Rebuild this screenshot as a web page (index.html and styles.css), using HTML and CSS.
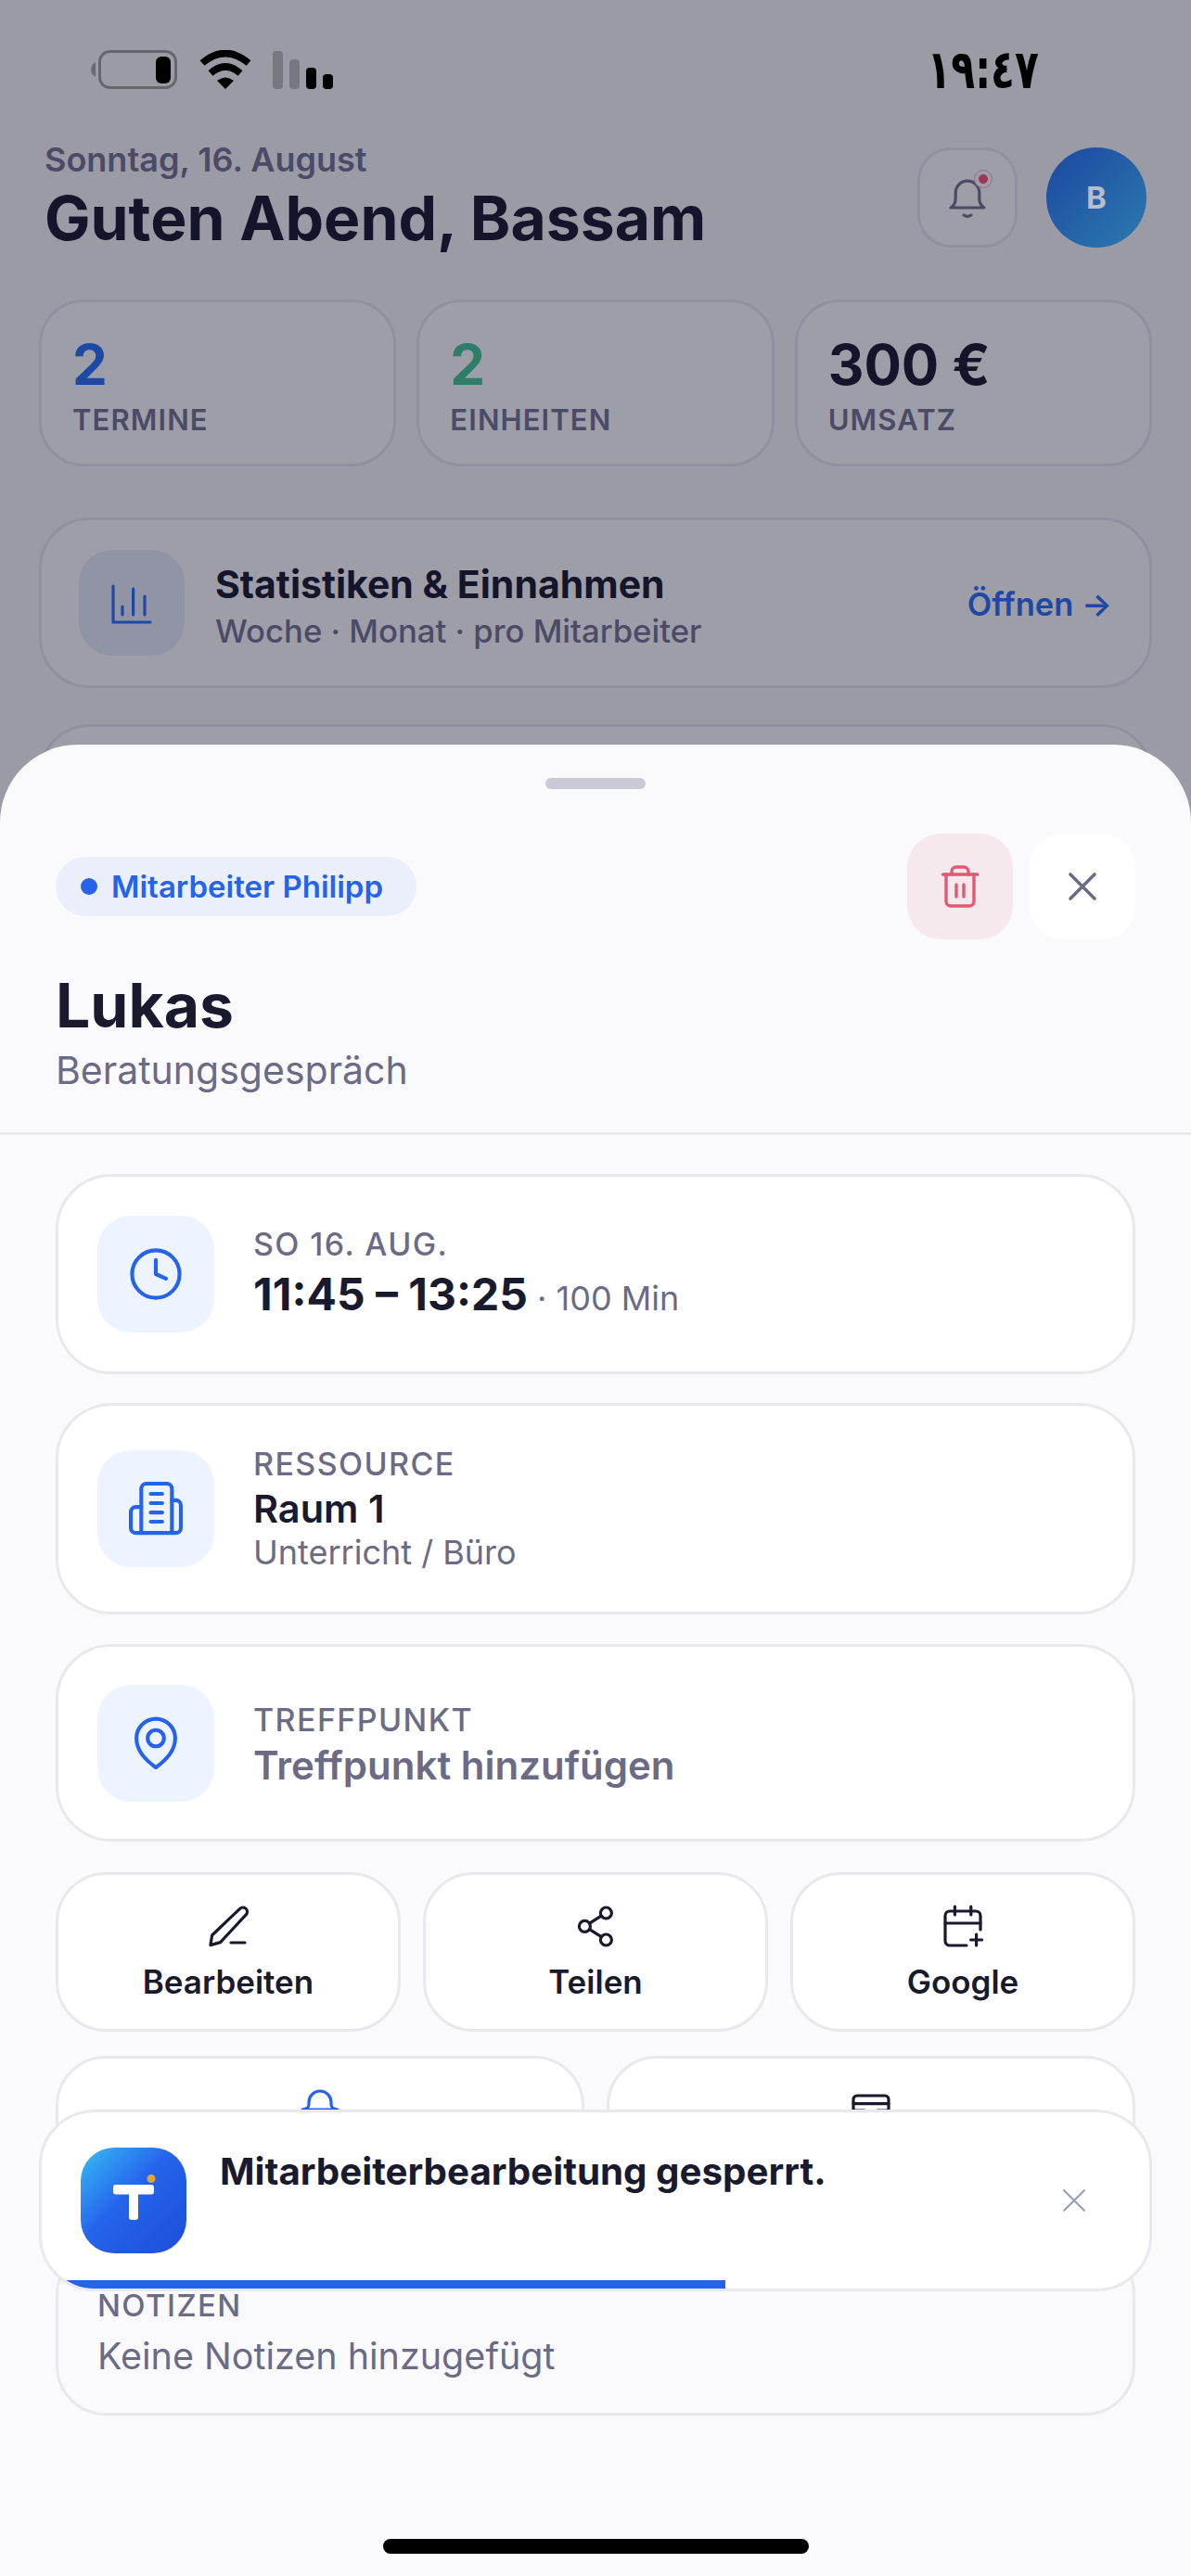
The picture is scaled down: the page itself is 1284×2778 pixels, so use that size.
FILE: index.html
```html
<!DOCTYPE html>
<html lang="de">
  <head>
    <meta charset="UTF-8" />
    <meta name="viewport" content="width=device-width, initial-scale=1.0" />
    <title>Termin Details</title>
    <link rel="stylesheet" href="styles.css">
  </head>
  <body>
    <div class="screen">

      <!-- dashboard behind the sheet -->
      <main class="dashboard">
        <header class="top">
          <div>
            <div class="date">Sonntag, 16. August</div>
            <h1 class="hello">Guten Abend, Bassam</h1>
          </div>
          <div class="top-actions">
            <div class="bell-btn">
              <svg class="ico-48" viewBox="0 0 24 24" fill="none" stroke="#757594" stroke-width="1.600" stroke-linecap="round" stroke-linejoin="round">
                <path d="M3 17.500c1.600-1 2.600-2.500 2.600-5V9.500a6.400 6.400 0 0 1 12.800 0v3c0 2.500 1 4 2.600 5z"/>
                <path d="M10 21.500q2 1.300 4 0"/>
              </svg>
              <span class="bell-dot"></span>
            </div>
            <div class="avatar">B</div>
          </div>
        </header>

        <section class="stats">
          <div class="stat">
            <div class="stat-num blue">2</div>
            <div class="stat-label">TERMINE</div>
          </div>
          <div class="stat">
            <div class="stat-num green">2</div>
            <div class="stat-label">EINHEITEN</div>
          </div>
          <div class="stat">
            <div class="stat-num">300 €</div>
            <div class="stat-label">UMSATZ</div>
          </div>
        </section>

        <section class="link-card">
          <div class="link-icon">
            <svg class="ico-48" viewBox="0 0 24 24" fill="none" stroke="#2a70fa" stroke-width="1.600" stroke-linecap="round" stroke-linejoin="round">
              <path d="M2 3v19.500h20"/>
              <path d="M7 18.500V14M12.800 18.500V4.500M19 18.500V8.500"/>
            </svg>
          </div>
          <div class="link-text">
            <div class="link-title">Statistiken &amp; Einnahmen</div>
            <div class="link-sub">Woche · Monat · pro Mitarbeiter</div>
          </div>
          <div class="link-open">Öffnen →</div>
        </section>

        <section class="link-card next"></section>
      </main>

      <div class="backdrop"></div>

      <div class="status">
        <div class="status-icons">
          <svg class="battery" viewBox="0 0 94 42" fill="none">
            <path d="M6 13a9 9 0 0 0 0 16z" fill="#6a6a72"/>
            <rect x="10.500" y="1.500" width="82" height="39" rx="11" stroke="#66666e" stroke-width="3"/>
            <rect x="71" y="7" width="16" height="29" rx="6" fill="#000"/>
          </svg>
          <svg class="wifi" viewBox="0 0 58 42" fill="none" stroke="#000" stroke-width="7.500">
            <path d="M4 14Q29 -7 54 14"/>
            <path d="M13 25Q29 11 45 25"/>
            <path d="M20 33Q29 26 38 33L29 42Z" fill="#000" stroke="none"/>
          </svg>
          <div class="signal">
            <span class="bar off b1"></span>
            <span class="bar off b2"></span>
            <span class="bar b3"></span>
            <span class="bar b4"></span>
          </div>
        </div>
        <div class="clock">١٩:٤٧</div>
      </div>

      <!-- termin sheet -->
      <section class="sheet">
        <div class="handle"></div>
        <div class="sheet-head">
          <div class="head-row">
            <div class="chip"><span class="chip-dot"></span>Mitarbeiter Philipp</div>
            <div class="head-btns">
              <div class="head-btn del">
                <svg class="ico-48" viewBox="0 0 24 24" fill="none" stroke="#e05a73" stroke-width="1.700" stroke-linecap="round" stroke-linejoin="round">
                  <path d="M2.800 5.500h18.600"/>
                  <path d="M7.500 5.500V4a2.500 2.500 0 0 1 2.500-2.500h4A2.500 2.500 0 0 1 16.500 4v1.500"/>
                  <path d="M4.500 5.500V20a2.500 2.500 0 0 0 2.500 2.500h10a2.500 2.500 0 0 0 2.500-2.500V5.500"/>
                  <path d="M10 11v6.500M14 11v6.500"/>
                </svg>
              </div>
              <div class="head-btn">
                <svg class="ico-48" viewBox="0 0 24 24" fill="none" stroke="#6b6b85" stroke-width="1.800" stroke-linecap="round">
                  <path d="M5.500 5.500l13 13M18.500 5.500l-13 13"/>
                </svg>
              </div>
            </div>
          </div>
          <h2 class="name">Lukas</h2>
          <div class="service">Beratungsgespräch</div>
        </div>

        <div class="sheet-body">
          <div class="info-card time-card">
            <div class="info-icon">
              <svg class="ico-66" viewBox="0 0 24 24" fill="none" stroke="#2563eb" stroke-width="1.500" stroke-linecap="round" stroke-linejoin="round">
                <circle cx="12" cy="12" r="9.300"/>
                <path d="M12 6.500V12l4 1.800"/>
              </svg>
            </div>
            <div class="time-text">
              <div class="info-label">SO 16. AUG.</div>
              <div class="time-line"><span class="time">11:45 – 13:25</span><span class="mins"> · 100 Min</span></div>
            </div>
          </div>

          <div class="info-card res-card">
            <div class="info-icon">
              <svg class="ico-66" viewBox="0 0 24 24" fill="none" stroke="#2563eb" stroke-width="1.500" stroke-linecap="round" stroke-linejoin="round">
                <path d="M6.300 21.500V4.200a2 2 0 0 1 2-2h8a2 2 0 0 1 2 2v17.300"/>
                <path d="M6.300 11.300H4.200a2 2 0 0 0-2 2v6.200a2 2 0 0 0 2 2h15.600a2 2 0 0 0 2-2v-8.800a2 2 0 0 0-2-2h-1.500"/>
                <path d="M10 6.200h4.500M10 9.800h4.500M10 13.500h4.500M10 17.100h4.500"/>
              </svg>
            </div>
            <div class="res-text">
              <div class="info-label">RESSOURCE</div>
              <div class="res-name">Raum 1</div>
              <div class="res-sub">Unterricht / Büro</div>
            </div>
          </div>

          <div class="info-card place-card">
            <div class="info-icon">
              <svg class="ico-66" viewBox="0 0 24 24" fill="none" stroke="#2563eb" stroke-width="1.500" stroke-linecap="round" stroke-linejoin="round">
                <path d="M12 21.500C8 18.500 4.400 15 4.400 10a7.600 7.600 0 0 1 15.200 0C19.600 15 16 18.500 12 21.500z"/>
                <circle cx="12" cy="10" r="3.200"/>
              </svg>
            </div>
            <div class="place-text">
              <div class="info-label">TREFFPUNKT</div>
              <div class="place">Treffpunkt hinzufügen</div>
            </div>
          </div>

          <div class="actions three">
            <div class="action">
              <svg class="ico-48" viewBox="0 0 24 24" fill="none" stroke="#1a1a2e" stroke-width="1.600" stroke-linecap="round" stroke-linejoin="round">
                <path d="M18.200 2.800a2.300 2.300 0 0 1 3.500 3L7.800 20.800 2.500 22.300l.8-5.300z"/>
                <path d="M13.500 21h7.500"/>
              </svg>
              <span>Bearbeiten</span>
            </div>
            <div class="action">
              <svg class="ico-48" viewBox="0 0 24 24" fill="none" stroke="#1a1a2e" stroke-width="1.600" stroke-linecap="round" stroke-linejoin="round">
                <circle cx="17.700" cy="5" r="3"/>
                <circle cx="6.200" cy="12.200" r="3"/>
                <circle cx="17.700" cy="19.500" r="3"/>
                <path d="M8.800 10.600l6.300-4M8.800 13.800l6.300 4"/>
              </svg>
              <span>Teilen</span>
            </div>
            <div class="action">
              <svg class="ico-48" viewBox="0 0 24 24" fill="none" stroke="#1a1a2e" stroke-width="1.600" stroke-linecap="round" stroke-linejoin="round">
                <path d="M21.500 14V6.500A2.500 2.500 0 0 0 19 4H5a2.500 2.500 0 0 0-2.500 2.500V20A2.500 2.500 0 0 0 5 22.500h9"/>
                <path d="M2.500 10.500h19M7.700 1.500V6M16.400 1.500V6M19.300 16.500v6M16.300 19.500h6"/>
              </svg>
              <span>Google</span>
            </div>
          </div>

          <!-- labels of this row sit behind the toast -->
          <div class="actions two">
            <div class="action">
              <svg class="ico-48" viewBox="0 0 24 24" fill="none" stroke="#2563eb" stroke-width="1.600" stroke-linecap="round" stroke-linejoin="round">
                <path d="M2.500 12c2.500-.3 3.500-1 3.500-3V8a6 6 0 0 1 12 0v1c0 2 1 2.700 3.500 3z"/>
              </svg>
            </div>
            <div class="action">
              <svg class="ico-48" viewBox="0 0 24 24" fill="none" stroke="#1a1a2e" stroke-width="1.600" stroke-linecap="round" stroke-linejoin="round">
                <path d="M2.500 20V6.500a2 2 0 0 1 2-2h15a2 2 0 0 1 2 2V20"/>
                <path d="M2.500 8.800h19M2.500 12.500h6l2 2.500h3l2-2.500h6"/>
              </svg>
            </div>
          </div>

          <div class="notes">
            <div class="info-label">NOTIZEN</div>
            <div class="notes-text">Keine Notizen hinzugefügt</div>
          </div>
        </div>
      </section>

      <!-- toast -->
      <div class="toast">
        <svg class="toast-logo" viewBox="0 0 114 114">
          <defs>
            <linearGradient id="logoGrad" x1="0" y1="0" x2="1" y2="1">
              <stop offset="0" stop-color="#38bdf8"/>
              <stop offset=".45" stop-color="#2563eb"/>
              <stop offset="1" stop-color="#1d4ed8"/>
            </linearGradient>
          </defs>
          <rect width="114" height="114" rx="36" fill="url(#logoGrad)"/>
          <rect x="35" y="40" width="44" height="10.500" rx="3" fill="#fff"/>
          <rect x="52" y="40" width="10" height="38" rx="3" fill="#fff"/>
          <circle cx="76" cy="33.500" r="4.500" fill="#e0a33e"/>
        </svg>
        <div class="toast-text">Mitarbeiterbearbeitung gesperrt.</div>
        <svg class="toast-close" viewBox="0 0 24 24" fill="none" stroke="#9a9eb5" stroke-width="2" stroke-linecap="round">
          <path d="M2 2l20 20M22 2L2 22"/>
        </svg>
        <div class="toast-bar" style="width: 61.7%"></div>
      </div>

      <div class="home-bar"></div>
    </div>
  </body>
</html>
```

FILE: styles.css
```css
* {
  box-sizing: border-box;
}
html,
body {
  margin: 0;
  padding: 0;
}
body {
  font-family: Inter, "Noto Sans", sans-serif;
  color: #1a1a2e;
  background: #fafafc;
}
h1,
h2 {
  margin: 0;
}
svg {
  display: block;
}
.screen {
  position: relative;
  width: 1284px;
  height: 2778px;
  overflow: hidden;
  background: #fafafc;
}
.ico-48 {
  width: 48px;
  height: 48px;
}
.ico-66 {
  width: 66px;
  height: 66px;
}

/* dashboard */
.dashboard {
  padding: 159px 42px 0;
}
.top {
  display: flex;
  justify-content: space-between;
  align-items: flex-start;
  height: 108px;
  padding: 0 6px;
}
.date {
  font-size: 36px;
  font-weight: 600;
  line-height: 26px;
  color: #757594;
}
.hello {
  margin-top: 10px;
  font-size: 66px;
  font-weight: 700;
  line-height: 80px;
}
.top-actions {
  display: flex;
  gap: 31px;
}
.bell-btn {
  position: relative;
  width: 108px;
  height: 108px;
  display: flex;
  align-items: center;
  justify-content: center;
  background: #fff;
  border: 3px solid #e8e8ee;
  border-radius: 36px;
}
.bell-dot {
  position: absolute;
  top: 21px;
  right: 24px;
  width: 20px;
  height: 20px;
  border-radius: 50%;
  border: 1px solid #ffaabb;
  background: radial-gradient(circle, #ff5577 4.700px, #fff 5.200px);
}
.avatar {
  position: relative;
  z-index: 1;
  width: 108px;
  height: 108px;
  border-radius: 50%;
  display: flex;
  align-items: center;
  justify-content: center;
  color: #b8bccd;
  font-size: 33px;
  font-weight: 700;
  background: linear-gradient(135deg, #1f4fa3 15%, #2a78ad 95%);
}
.stats {
  display: flex;
  gap: 22px;
  margin-top: 56px;
}
.stat {
  flex: 1;
  height: 180px;
  padding: 37px 33px 0;
  background: #fff;
  border: 3px solid #e8e8ee;
  border-radius: 48px;
}
.stat-num {
  font-size: 60px;
  font-weight: 700;
  line-height: 60px;
}
.blue {
  color: #2a70fa;
}
.green {
  color: #44c894;
}
.stat-label {
  margin-top: 10px;
  font-size: 31px;
  font-weight: 600;
  line-height: 40px;
  letter-spacing: 1.100px;
  color: #757594;
}
.link-card {
  display: flex;
  align-items: center;
  height: 184px;
  margin-top: 55px;
  padding: 0 40px 0 40px;
  background: #fff;
  border: 3px solid #e8e8ee;
  border-radius: 54px;
}
.link-card.next {
  height: 200px;
  margin-top: 39px;
}
.link-icon {
  width: 114px;
  height: 114px;
  display: flex;
  align-items: center;
  justify-content: center;
  border-radius: 36px;
  background: #eaeffb;
}
.link-text {
  flex: 1;
  margin-left: 33px;
  padding-top: 7px;
}
.link-title {
  font-size: 41px;
  font-weight: 700;
  line-height: 50px;
}
.link-sub {
  margin-top: 3px;
  font-size: 34.700px;
  font-weight: 500;
  line-height: 44px;
  color: #757594;
}
.link-open {
  padding-top: 3px;
  font-size: 34.500px;
  font-weight: 600;
  color: #2a70fa;
}
.backdrop {
  position: absolute;
  inset: 0;
  background: rgba(12, 12, 37, 0.4);
}

/* status bar */
.status {
  position: absolute;
  top: 54px;
  left: 97px;
  right: 164px;
  height: 42px;
  display: flex;
  justify-content: space-between;
  align-items: center;
}
.status-icons {
  display: flex;
  align-items: flex-end;
}
.battery {
  width: 94px;
  height: 42px;
}
.wifi {
  width: 58px;
  height: 42px;
  margin-left: 23px;
}
.signal {
  display: flex;
  align-items: flex-end;
  gap: 7px;
  margin-left: 22px;
}
.bar {
  width: 11px;
  background: #000;
  border-radius: 4px;
}
.bar.off {
  background: #77777f;
}
.b1 {
  height: 41px;
}
.b2 {
  height: 32px;
}
.b3 {
  height: 23px;
}
.b4 {
  height: 16px;
}
.clock {
  font-family: "DejaVu Sans", sans-serif;
  font-size: 58px;
  font-weight: 700;
  line-height: 42px;
  color: #000;
  transform: scaleX(0.73);
  transform-origin: right center;
}

/* sheet */
.sheet {
  position: absolute;
  top: 803px;
  left: 0;
  right: 0;
  bottom: 0;
  background: #fafafc;
  border-radius: 84px 84px 0 0;
  padding-top: 36px;
}
.handle {
  width: 108px;
  height: 12px;
  margin: 0 auto;
  border-radius: 6px;
  background: #c8cad8;
}
.sheet-head {
  margin-top: 48px;
  padding: 0 60px 42px;
  border-bottom: 3px solid #e8e8ee;
}
.head-row {
  display: flex;
  justify-content: space-between;
  align-items: center;
}
.chip {
  display: flex;
  align-items: center;
  gap: 15px;
  height: 64px;
  padding: 0 36px 0 27px;
  border-radius: 32px;
  background: #ebeffb;
  color: #2563eb;
  font-size: 33px;
  font-weight: 600;
}
.chip-dot {
  width: 18px;
  height: 18px;
  border-radius: 50%;
  background: #2563eb;
}
.head-btns {
  display: flex;
  gap: 18px;
}
.head-btn {
  width: 114px;
  height: 114px;
  display: flex;
  align-items: center;
  justify-content: center;
  border-radius: 36px;
  background: #fff;
}
.head-btn.del {
  background: #f5e9ed;
}
.name {
  margin-top: 31px;
  font-size: 66px;
  font-weight: 700;
  line-height: 80px;
}
.service {
  margin-top: 5px;
  font-size: 41px;
  line-height: 50px;
  color: #6b6b85;
}
.sheet-body {
  padding: 42px 60px 0;
  display: flex;
  flex-direction: column;
  gap: 31px;
}
.info-card {
  display: flex;
  align-items: center;
  gap: 42px;
  padding: 0 42px;
  background: #fff;
  border: 3px solid #e8e8ee;
  border-radius: 60px;
}
.time-card {
  height: 216px;
}
.res-card {
  height: 228px;
}
.place-card {
  height: 213px;
  margin-top: 1px;
}
.info-icon {
  flex: none;
  width: 126px;
  height: 126px;
  display: flex;
  align-items: center;
  justify-content: center;
  border-radius: 36px;
  background: #eef4ff;
}
.info-label {
  font-size: 34px;
  font-weight: 500;
  line-height: 40px;
  letter-spacing: 1.400px;
  color: #6b6b85;
}
.time-text {
  padding-top: 8px;
}
.time-line {
  margin-top: 6px;
  line-height: 56px;
}
.time {
  font-size: 48px;
  font-weight: 700;
}
.mins {
  font-size: 36px;
  color: #6b6b85;
}
.res-text {
  padding-top: 2px;
}
.res-name {
  margin-top: 4px;
  font-size: 41.500px;
  font-weight: 600;
  line-height: 48px;
}
.res-sub {
  font-size: 36px;
  line-height: 46px;
  color: #6b6b85;
}
.place-text {
  padding-top: 5px;
}
.place {
  margin-top: 3px;
  font-size: 42px;
  font-weight: 600;
  line-height: 52px;
  color: #6b6b85;
}
.actions {
  display: grid;
  gap: 24px;
}
.actions.three {
  grid-template-columns: repeat(3, 1fr);
  margin-top: 2px;
}
.actions.two {
  grid-template-columns: repeat(2, 1fr);
  margin-top: -5px;
}
.action {
  height: 172px;
  display: flex;
  flex-direction: column;
  align-items: center;
  padding-top: 31px;
  gap: 15px;
  background: #fff;
  border: 3px solid #e8e8ee;
  border-radius: 54px;
  font-size: 35px;
  font-weight: 600;
}
.notes {
  height: 185px;
  padding: 43px 42px 0;
  border: 3px solid #e8e8ee;
  border-radius: 54px;
}
.notes .info-label {
  font-size: 33px;
}
.notes-text {
  margin-top: 10px;
  font-size: 39.500px;
  line-height: 50px;
  color: #6b6b85;
}

/* toast */
.toast {
  position: absolute;
  top: 2275px;
  left: 42px;
  width: 1200px;
  height: 196px;
  display: flex;
  align-items: center;
  padding: 0 68px 0 42px;
  background: #fff;
  border: 3px solid #e8e8ee;
  border-radius: 60px;
  overflow: hidden;
}
.toast-logo {
  flex: none;
  width: 114px;
  height: 114px;
}
.toast-text {
  flex: 1;
  align-self: flex-start;
  margin: 39px 0 0 36px;
  font-size: 40.300px;
  font-weight: 700;
  line-height: 50px;
}
.toast-close {
  flex: none;
  width: 26px;
  height: 26px;
}
.toast-bar {
  position: absolute;
  left: 0;
  bottom: 0;
  height: 9px;
  background: #2563eb;
}
.home-bar {
  position: absolute;
  left: 413px;
  bottom: 24px;
  width: 459px;
  height: 16px;
  border-radius: 8px;
  background: #000;
}
```
